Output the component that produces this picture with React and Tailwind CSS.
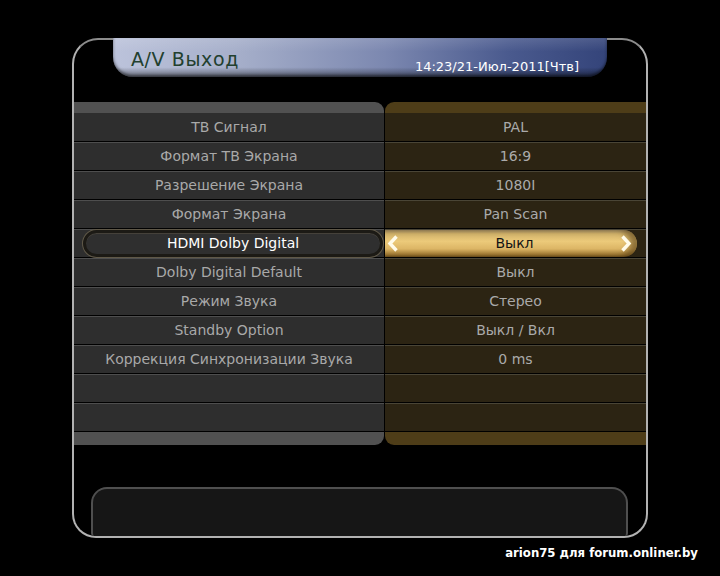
import React from "react";

const rows = [
  ["ТВ Сигнал", "PAL"],
  ["Формат ТВ Экрана", "16:9"],
  ["Разрешение Экрана", "1080I"],
  ["Формат Экрана", "Pan Scan"],
  ["HDMI Dolby Digital", "Выкл", true],
  ["Dolby Digital Default", "Выкл"],
  ["Режим Звука", "Стерео"],
  ["Standby Option", "Выкл / Вкл"],
  ["Коррекция Синхронизации Звука", "0 ms"],
  ["", ""],
  ["", ""],
];

function Chevron({ dir }) {
  return (
    <svg width="12" height="17" viewBox="0 0 12 17" className="shrink-0">
      {dir === "left" ? (
        <polyline points="9.5,1.5 3,8.5 9.5,15.5" fill="none" stroke="#fffbea" strokeWidth="3.4" strokeLinejoin="miter" />
      ) : (
        <polyline points="2.5,1.5 9,8.5 2.5,15.5" fill="none" stroke="#fffbea" strokeWidth="3.4" strokeLinejoin="miter" />
      )}
    </svg>
  );
}

function Row({ label, value, active, first }) {
  const topL = first ? "border-t-transparent" : "border-t-[#4e4e4e]";
  const topR = first ? "border-t-transparent" : "border-t-[#4a4536]";
  return (
    <div className="flex h-[29px]">
      <div className={`w-[310px] bg-[#2e2e2e] border-t border-b border-b-black ${topL} flex items-center justify-center text-[14px] leading-none text-[#a9a9a9] pb-px`}>
        {active ? (
          <div className="ml-[9px] mr-px flex-1 h-[27px] rounded-full border-[3px] border-[#1c1a15] bg-[#2f2f2f] shadow-[0_0_0_1px_#5f5848,inset_0_1px_0_#45413a] flex items-center justify-center text-white pb-px">
            {label}
          </div>
        ) : (
          label
        )}
      </div>
      <div className="w-px bg-black" />
      <div className={`flex-1 bg-[#2c2413] border-t border-b border-b-black ${topR} flex items-center justify-center text-[14px] leading-none text-[#aaaaaa] pb-px`}>
        {active ? (
          <div className="mr-[9px] flex-1 h-[27px] rounded-l-[8px] rounded-r-full bg-[linear-gradient(to_bottom,#a8946a_0%,#d3b46c_14%,#ecca7a_42%,#dcb565_70%,#a07a34_92%,#6e5220_100%)] shadow-[inset_-7px_0_6px_rgba(70,45,10,0.55)] flex items-center pl-[2px] pr-[5px]">
            <Chevron dir="left" />
            <span className="flex-1 text-center pl-[10px] pb-px text-[#141414]">{value}</span>
            <Chevron dir="right" />
          </div>
        ) : (
          value
        )}
      </div>
    </div>
  );
}

export default function App() {
  return (
    <div className="w-[720px] h-[576px] bg-black overflow-hidden font-['DejaVu_Sans',sans-serif] pt-[38px]">
      <div className="ml-[72px] w-[576px] h-[500px] border-2 border-[#b2b2b2] border-t-[#8c8c8c] rounded-t-[26px] rounded-b-[24px] flex flex-col">
        <div className="-mt-[2px] ml-[39px] w-[494px] h-[39px] shrink-0 rounded-b-[20px] bg-[linear-gradient(to_bottom,rgba(255,255,255,0.12),rgba(255,255,255,0)_35%,rgba(0,0,0,0)_75%,rgba(0,0,0,0.45)),linear-gradient(to_right,#bcc3db_0%,#a6afca_25%,#7c88b0_55%,#4a5a8e_80%,#34447a_100%)] shadow-[inset_0_-2px_3px_rgba(0,0,0,0.5)] flex items-start">
          <div className="ml-[18px] mt-[12px] text-[19px] leading-none tracking-[0.6px] text-[#22402e]">A/V Выход</div>
          <div className="ml-auto mr-[28px] mt-[22px] text-[13px] leading-none text-white">14:23/21-Июл-2011[Чтв]</div>
        </div>
        <div className="mt-[25px] flex flex-col">
          <div className="flex h-[11px]">
            <div className="w-[310px] bg-[#515151] rounded-tr-[9px]" />
            <div className="w-px" />
            <div className="flex-1 bg-[#4e3d18] rounded-tl-[9px]" />
          </div>
          {rows.map((r, i) => (
            <Row key={i} label={r[0]} value={r[1]} active={r[2]} first={i === 0} />
          ))}
          <div className="flex h-[13px]">
            <div className="w-[310px] bg-[#515151] rounded-br-[9px]" />
            <div className="w-px" />
            <div className="flex-1 bg-[#4e3d18] rounded-bl-[9px]" />
          </div>
        </div>
        <div className="mt-[42px] ml-[17px] w-[537px] flex-1 rounded-t-[16px] rounded-b-[3px] border-2 border-b-0 border-[#4f4f4f] bg-[#161616]" />
      </div>
      <div className="flex justify-end pr-[22px] mt-[8px]">
        <div className="font-['DejaVu_Sans_Condensed','DejaVu_Sans',sans-serif] font-stretch-condensed font-bold text-[13px] leading-none text-white">
          arion75 для forum.onliner.by
        </div>
      </div>
    </div>
  );
}
